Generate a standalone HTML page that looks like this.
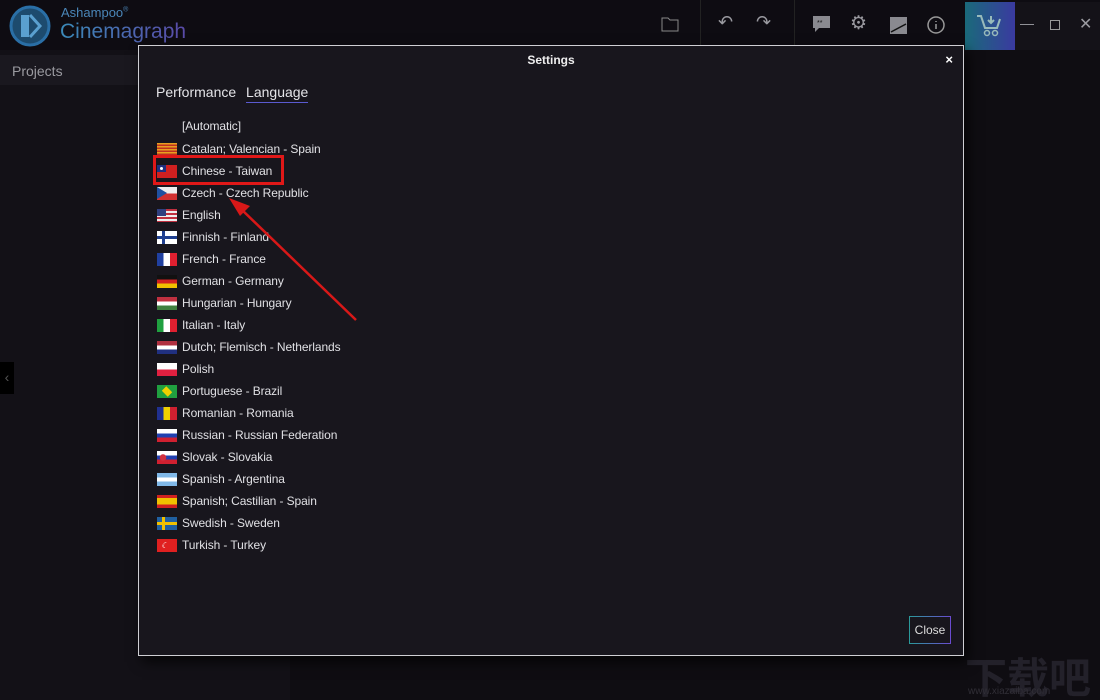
<!DOCTYPE html>
<html><head><meta charset="utf-8"><style>
*{margin:0;padding:0;box-sizing:border-box}
html,body{width:1100px;height:700px;overflow:hidden}
body{background:#121016;font-family:"Liberation Sans","Noto Sans CJK SC",sans-serif;position:relative;color:#d8d8dc}
.top{position:absolute;left:0;top:0;width:1100px;height:50px;background:#0e0c12}
.projects{position:absolute;left:0;top:55px;width:290px;height:30px;background:#1a181f;color:#9a9aa0;font-size:14px;padding:8px 12px}
.left{position:absolute;left:0;top:85px;width:290px;height:615px;background:#131117}
.right{position:absolute;left:290px;top:50px;width:810px;height:650px;background:#0f0d12}
.dlg{position:absolute;left:138px;top:45px;width:826px;height:611px;background:#18161d;border:1px solid #cfcfd4;box-shadow:4px 6px 12px rgba(0,0,0,.7)}
.title{position:absolute;top:7px;width:100%;text-align:center;font-size:12px;font-weight:bold;color:#eee}
.x{position:absolute;right:10px;top:6px;font-size:13px;font-weight:bold;color:#fff}
.tabs{position:absolute;left:17px;top:38px;font-size:14px;color:#e4e4e8}
.tabs span{margin-right:6px}
.tabs .act{border-bottom:1px solid #5a5ad0;padding-bottom:2px}
.row{position:absolute;left:18px;height:14px;font-size:12px;color:#e0e0e4;line-height:14px;letter-spacing:-0.1px}
.row i{position:absolute;left:0;top:1px;width:20px;height:13px;display:block}
.row b{position:absolute;left:25px;top:0;font-weight:normal;white-space:nowrap}
.close{position:absolute;right:12px;bottom:11px;width:42px;height:28px;border:1px solid;border-image:linear-gradient(90deg,#2a9a9a,#6a4ad0) 1;font-size:12px;color:#ddd;text-align:center;line-height:26px}
.icon{position:absolute;color:#9a9aa0}
</style></head><body>
<div class="top"></div>
<svg style="position:absolute;left:8px;top:4px" width="44" height="44"><circle cx="22" cy="22" r="19" fill="#1d4b6e" stroke="#2a6fa6" stroke-width="3"/><rect x="13" y="11" width="8" height="22" fill="#5aa0d0"/><path d="M22 11 L32 22 L22 33" stroke="#5aa0d0" stroke-width="3" fill="none"/></svg>
<div style="position:absolute;left:61px;top:5px;font-size:13px;color:#4a86b8">Ashampoo<sup style="font-size:7px">®</sup></div>
<div style="position:absolute;left:60px;top:20px;font-size:21px;background:linear-gradient(90deg,#3a8ab8,#5a4aa8);-webkit-background-clip:text;color:transparent">Cinemagraph</div>
<div style="position:absolute;left:700px;top:0;width:1px;height:45px;background:#222"></div>
<div style="position:absolute;left:794px;top:0;width:1px;height:45px;background:#222"></div>
<svg class="icon" style="left:661px;top:16px" width="18" height="16"><path d="M1 2h6l2 2h8v11H1z" fill="none" stroke="#888"/></svg>
<div class="icon" style="left:718px;top:12px;font-size:18px">↶</div>
<div class="icon" style="left:756px;top:12px;font-size:18px">↷</div>
<svg class="icon" style="left:813px;top:16px" width="18" height="18"><path d="M0 0h17v12H6l-4 4v-4H0z" fill="#8a8a90"/><text x="4" y="9" font-size="7" fill="#111">**</text></svg>
<div class="icon" style="left:850px;top:12px;font-size:19px">⚙</div>
<svg class="icon" style="left:890px;top:17px" width="17" height="17"><rect width="17" height="17" fill="#8a8a90"/><path d="M1 15L16 7" stroke="#111" stroke-width="1.5"/></svg>
<svg class="icon" style="left:927px;top:16px" width="18" height="18"><circle cx="9" cy="9" r="8" fill="none" stroke="#999" stroke-width="1.5"/><path d="M9 8v5M9 5v1" stroke="#999" stroke-width="1.5"/></svg>
<div style="position:absolute;left:965px;top:2px;width:50px;height:48px;background:linear-gradient(90deg,#1a6a7a,#3a3aa0)"></div>
<svg style="position:absolute;left:976px;top:14px" width="28" height="24"><path d="M1 2h4l4 12h12l3-9" fill="none" stroke="#9bb" stroke-width="2"/><path d="M15 2v7M12 6l3 3 3-3" stroke="#9bb" stroke-width="2" fill="none"/><circle cx="11" cy="19" r="2.5" fill="none" stroke="#9bb" stroke-width="1.5"/><circle cx="19" cy="19" r="2.5" fill="none" stroke="#9bb" stroke-width="1.5"/></svg>
<div style="position:absolute;left:1015px;top:2px;width:85px;height:48px;background:#141218"></div>
<div class="icon" style="left:1020px;top:15px;font-size:14px">—</div>
<div style="position:absolute;left:1050px;top:20px;width:10px;height:10px;border:1px solid #999"></div>
<div class="icon" style="left:1079px;top:14px;font-size:16px">✕</div>
<div class="projects">Projects</div>
<div class="left"></div>
<div class="right"></div>
<div style="position:absolute;left:0;top:362px;width:14px;height:32px;background:#000;color:#555;font-size:14px;text-align:center;line-height:30px">‹</div>
<div style="position:absolute;left:965px;top:645px;font-size:42px;font-weight:bold;color:#23212a;font-family:'Noto Sans CJK SC',sans-serif">下载吧</div>
<div style="position:absolute;left:968px;top:686px;font-size:10px;color:#302e36">www.xiazaiba.com</div>

<div class="dlg">
<div class="title">Settings</div><div class="x">×</div>
<div class="tabs"><span>Performance</span> <span class="act">Language</span></div>

<div class="row" style="top:73px"><b>[Automatic]</b></div>
<div class="row" style="top:96px"><i style="background:repeating-linear-gradient(#e8a020 0 1.5px,#c03020 1.5px 3px)"></i><b>Catalan; Valencian - Spain</b></div>
<div class="row" style="top:118px"><i style="background:#d02020"><span style="display:block;width:9px;height:7px;background:#203080;position:relative"><span style="position:absolute;left:3px;top:2px;width:3px;height:3px;background:#fff;border-radius:50%"></span></span></i><b>Chinese - Taiwan</b></div>
<div class="row" style="top:140px"><i style="background:linear-gradient(#eee 50%,#d03030 50%)"><span style="display:block;width:0;height:0;border-left:10px solid #2050a0;border-top:6.5px solid transparent;border-bottom:6.5px solid transparent"></span></i><b>Czech - Czech Republic</b></div>
<div class="row" style="top:162px"><i style="background:repeating-linear-gradient(#c03040 0 2px,#eee 2px 4px)"><span style="display:block;width:9px;height:7px;background:#304080"></span></i><b>English</b></div>
<div class="row" style="top:184px"><i style="background:linear-gradient(transparent 5px,#204090 5px 8px,transparent 8px),linear-gradient(90deg,#fff 5px,#204090 5px 8px,#fff 8px)"></i><b>Finnish - Finland</b></div>
<div class="row" style="top:206px"><i style="background:linear-gradient(90deg,#2040a0 33%,#fff 33% 66%,#e02030 66%)"></i><b>French - France</b></div>
<div class="row" style="top:228px"><i style="background:linear-gradient(#111 33%,#d02020 33% 66%,#f0c000 66%)"></i><b>German - Germany</b></div>
<div class="row" style="top:250px"><i style="background:linear-gradient(#c03040 33%,#fff 33% 66%,#408040 66%)"></i><b>Hungarian - Hungary</b></div>
<div class="row" style="top:272px"><i style="background:linear-gradient(90deg,#20a040 33%,#fff 33% 66%,#e02030 66%)"></i><b>Italian - Italy</b></div>
<div class="row" style="top:294px"><i style="background:linear-gradient(#b03040 33%,#fff 33% 66%,#203080 66%)"></i><b>Dutch; Flemisch - Netherlands</b></div>
<div class="row" style="top:316px"><i style="background:linear-gradient(#fff 50%,#e02040 50%)"></i><b>Polish</b></div>
<div class="row" style="top:338px"><i style="background:radial-gradient(circle,#203080 2.5px,transparent 3px),linear-gradient(#20a040,#20a040)"><span style="display:block;margin:2px auto;width:12px;height:9px;background:#f0d000;transform:rotate(45deg) scale(.7)"></span></i><b>Portuguese - Brazil</b></div>
<div class="row" style="top:360px"><i style="background:linear-gradient(90deg,#203090 33%,#f0d000 33% 66%,#d02030 66%)"></i><b>Romanian - Romania</b></div>
<div class="row" style="top:382px"><i style="background:linear-gradient(#fff 33%,#2040b0 33% 66%,#d02030 66%)"></i><b>Russian - Russian Federation</b></div>
<div class="row" style="top:404px"><i style="background:radial-gradient(circle at 30% 50%,#d03040 3px,transparent 3.5px),linear-gradient(#fff 33%,#2040b0 33% 66%,#d02030 66%)"></i><b>Slovak - Slovakia</b></div>
<div class="row" style="top:426px"><i style="background:linear-gradient(#80b8e8 33%,#fff 33% 66%,#80b8e8 66%)"></i><b>Spanish - Argentina</b></div>
<div class="row" style="top:448px"><i style="background:linear-gradient(#d02020 25%,#f0c000 25% 75%,#d02020 75%)"></i><b>Spanish; Castilian - Spain</b></div>
<div class="row" style="top:470px"><i style="background:linear-gradient(transparent 5px,#f0c000 5px 8px,transparent 8px),linear-gradient(90deg,#2060a0 5px,#f0c000 5px 8px,#2060a0 8px)"></i><b>Swedish - Sweden</b></div>
<div class="row" style="top:492px"><i style="background:#e02020;color:#fff;font-size:8px;line-height:13px;padding-left:4px">☾</i><b>Turkish - Turkey</b></div>
<div class="close">Close</div>
</div>
<div style="position:absolute;left:153px;top:155px;width:131px;height:30px;border:3px solid #e01818"></div>
<svg style="position:absolute;left:0;top:0" width="1100" height="700"><line x1="356" y1="320" x2="240" y2="208" stroke="#d81818" stroke-width="2.5"/><path d="M229 198 L250 206 L240 216 Z" fill="#d81818"/></svg>
</body></html>
